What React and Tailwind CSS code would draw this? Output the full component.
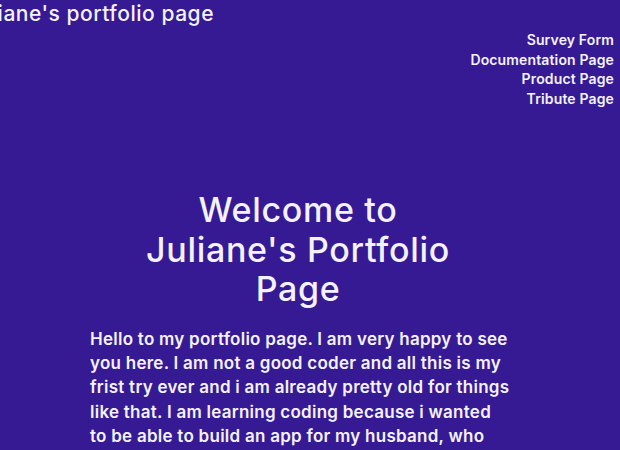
export default function App() {
  const links = ["Survey Form", "Documentation Page", "Product Page", "Tribute Page"];

  return (
    <div className="min-h-screen overflow-hidden bg-[#361a94] text-[#f4f2ff] font-['Inter',sans-serif]">
      {/* Header */}
      <header className="flex flex-col">
        <h1 className="-ml-[34px] whitespace-nowrap text-[21px] font-medium leading-[28px] tracking-[0.025em]">
          Juliane's portfolio page
        </h1>
        <nav className="mt-[2px] flex flex-col items-end pr-[6px] text-[14px] font-semibold leading-[19.5px] tracking-[0.01em]">
          {links.map((l) => (
            <a key={l} href="#">
              {l}
            </a>
          ))}
        </nav>
      </header>

      {/* Welcome */}
      <section className="mt-[82px] flex flex-col items-center pr-[24px]">
        <h2 className="w-[320px] text-center text-[34px] font-medium leading-[39.5px] tracking-[0.02em]">
          Welcome to Juliane's Portfolio Page
        </h2>
        <p className="ml-[6px] mt-[18px] w-[422px] text-[17px] font-semibold leading-[24.4px] tracking-[0.015em]">
          Hello to my portfolio page. I am very happy to see you here. I am not a good coder and all this is my
          frist try ever and i am already pretty old for things like that. I am learning coding because i wanted
          to be able to build an app for my husband, who works a lot and needs a little help with his daily
          planning.
        </p>
      </section>
    </div>
  );
}
